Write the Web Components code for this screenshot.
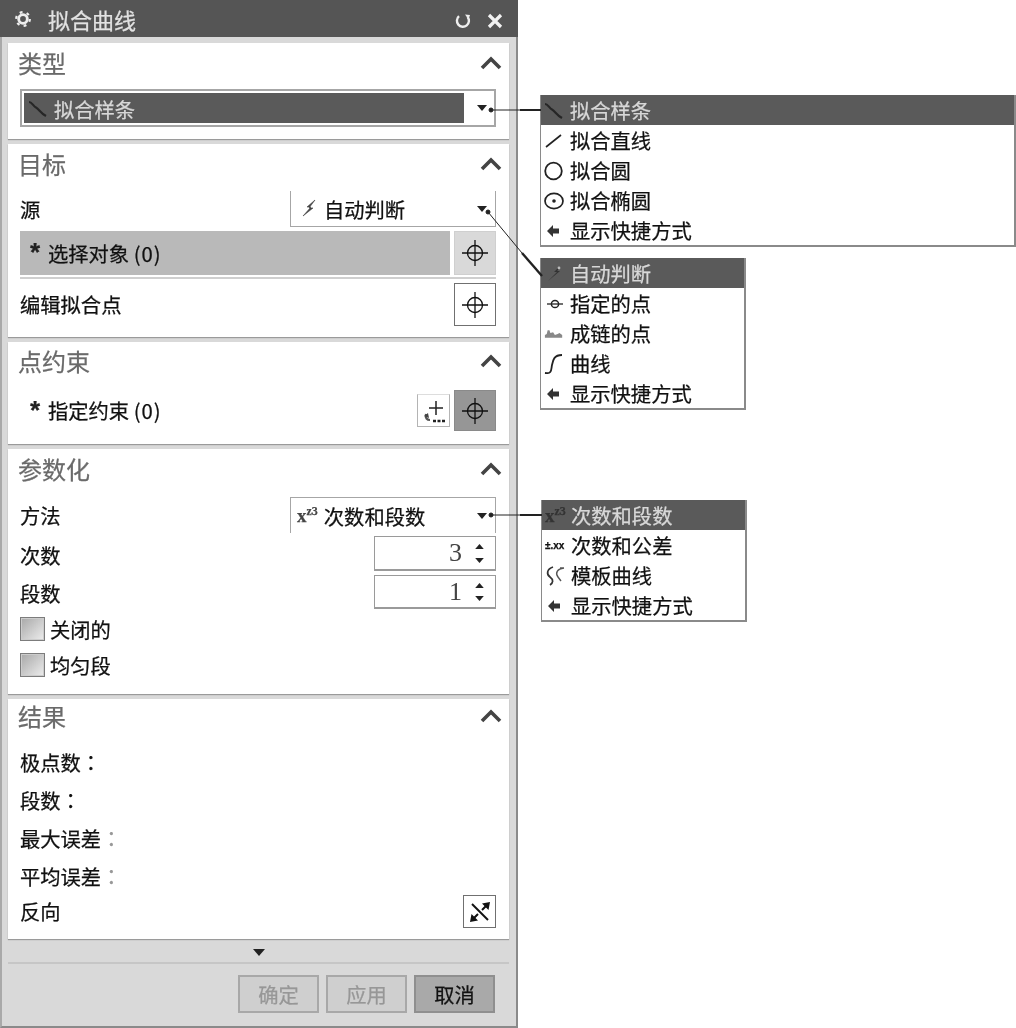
<!DOCTYPE html>
<html lang="zh">
<head>
<meta charset="utf-8">
<title>拟合曲线</title>
<style>
  html, body { margin: 0; background: #fff; }
  body {
    position: relative;
    width: 1016px;
    height: 1028px;
    overflow: hidden;
    font-family: "Noto Sans CJK SC", "Liberation Sans", sans-serif;
    font-size: 20.3px;
    color: #111;
    -webkit-text-stroke: 0.25px;
    filter: blur(0.6px); /* the reference is a soft scan */
  }
  .colon { font-family: "Noto Sans CJK TC", sans-serif; }
  .colon.dim { color: #999; }
  .zero { letter-spacing: 1px; }
  .exp { font: bold 19px "Liberation Serif", serif; color: #444; white-space: nowrap; position: relative; }
  .exp sup { font-size: 12px; line-height: 0; }
</style>
<script>
// Icons used by the dialog and the callout menus
const ICONS = {
  gear: `<svg width="18" height="18" viewBox="0 0 20 20"><circle cx="10" cy="10" r="4.8" fill="none" stroke="#eee" stroke-width="3.2"/><circle cx="10" cy="10" r="7.6" fill="none" stroke="#eee" stroke-width="2.4" stroke-dasharray="3.2 4.76"/></svg>`,
  refresh: `<svg width="20" height="20" viewBox="0 0 20 20"><path d="M6 5.2A6 6 0 1 0 14.6 6" fill="none" stroke="#eee" stroke-width="2.4"/><path d="M12 3.5l5 .4-1.500 4.600z" fill="#eee"/></svg>`,
  close: `<svg width="20" height="20" viewBox="0 0 20 20"><path d="M4 4l12 12M16 4L4 16" stroke="#f2f2f2" stroke-width="3.2"/></svg>`,
  chevron: `<svg width="22" height="14" viewBox="0 0 22 14"><path d="M2 12l9-9 9 9" fill="none" stroke="#444" stroke-width="3.6"/></svg>`,
  down: `<svg width="12" height="7" viewBox="0 0 12 7"><path d="M0 0h12L6 7z" fill="#222"/></svg>`,
  caret: `<svg width="10" height="6" viewBox="0 0 10 6"><path d="M0 0h10L5 6z" fill="#222"/></svg>`,
  cross: `<svg width="28" height="28" viewBox="0 0 28 28"><circle cx="14" cy="14" r="7.5" fill="none" stroke="#111" stroke-width="1.3"/><path d="M1 14h26M14 1v26" stroke="#111" stroke-width="1.3"/></svg>`,
  addpoint: `<svg width="30" height="30" viewBox="0 0 30 30"><path d="M17 5v14M10 12h14" stroke="#222" stroke-width="1.500"/><path d="M7 18c-1 4 1 6 4 6" fill="none" stroke="#555" stroke-width="2.200"/><path d="M5 20l4-3 1 5z" fill="#444"/><path d="M14 25h3M18.500 25h3M23 25h3" stroke="#222" stroke-width="2.400"/></svg>`,
  reverse: `<svg width="26" height="26" viewBox="0 0 26 26"><path d="M5 5l16 16" stroke="#111" stroke-width="2"/><path d="M5 21l6-6M15 11l6-6" stroke="#111" stroke-width="2"/><path d="M23 3l-1.500 8-6.500-6.500zM3 23l1.500-8 6.500 6.500z" fill="#111"/></svg>`,
  spline: `<svg width="20" height="20" viewBox="0 0 20 20"><path d="M1 3c3 0 4 4 7 5.500s4 5 10 8.500" fill="none" stroke="#262626" stroke-width="2.200"/></svg>`,
  line: `<svg width="20" height="20" viewBox="0 0 20 20"><path d="M2 16L17 4" stroke="#222" stroke-width="1.700"/></svg>`,
  circle: `<svg width="20" height="20" viewBox="0 0 20 20"><circle cx="9.500" cy="10" r="8.300" fill="none" stroke="#222" stroke-width="1.800"/></svg>`,
  ellipse: `<svg width="20" height="20" viewBox="0 0 20 20"><ellipse cx="10" cy="10" rx="9" ry="7.600" fill="none" stroke="#222" stroke-width="1.700"/><circle cx="10" cy="10" r="1.800" fill="#222"/></svg>`,
  shortcut: `<svg width="20" height="20" viewBox="0 0 20 20"><path d="M3 10l6-6v3.500h6v5H9V16z" fill="#333"/></svg>`,
  auto: `<svg width="20" height="20" viewBox="0 0 20 20"><path d="M15 1L7 8h4L3 17l10-8H9l6-8z" fill="#444" stroke="#444" stroke-width=".6"/></svg>`,
  autodark: `<svg width="20" height="20" viewBox="0 0 20 20"><path d="M15 3l-5 5h3l-9 9 12-10h-3l3-3z" fill="#333"/><circle cx="15" cy="4" r="1.400" fill="#bbb"/></svg>`,
  point: `<svg width="20" height="20" viewBox="0 0 20 20"><circle cx="11" cy="10" r="3.600" fill="none" stroke="#222" stroke-width="1.500"/><path d="M3 10h16" stroke="#222" stroke-width="1.300"/></svg>`,
  chain: `<svg width="22" height="20" viewBox="0 0 22 20"><path d="M1 11l2-1 1-4 2 0 1 3 3-1 2 3 3-1 2-1 3 2v3H1z" fill="#888"/></svg>`,
  curve: `<svg width="20" height="20" viewBox="0 0 20 20"><path d="M1 19c7 1 6-3 7-8s2-10 10-10" fill="none" stroke="#222" stroke-width="1.800"/></svg>`,
  template: `<svg width="20" height="20" viewBox="0 0 20 20"><path d="M8 1C2 3 1 8 5 11s3 6 0 8" fill="none" stroke="#333" stroke-width="1.700"/><path d="M19 2c-7 1-9 5-6 9l3 4M15 2h4" fill="none" stroke="#555" stroke-width="1.400"/></svg>`
};

class NxDialog extends HTMLElement {
  constructor() {
    super();
    this.attachShadow({ mode: "open" });
  }

  connectedCallback() {
    const title = this.getAttribute("title") || "";
    this.shadowRoot.innerHTML = `
      <style>
        :host { display: flex; flex-direction: column; width: 518px; height: 1028px; box-sizing: border-box; }
        .bar { flex: none; height: 37px; background: #555; color: #e2e2e2; display: flex; align-items: center; font-size: 22px; padding-left: 14px; }
        .bar .name { margin-left: 16px; flex: 1; line-height: 37px; position: relative; top: 1px; }
        .bar .btn { display: flex; margin-right: 12px; position: relative; top: 2px; }
        .bar .btn + .btn { margin-right: 13px; }
        .body { flex: 1; display: flex; flex-direction: column; gap: 5px; background: #d9d9d9; padding: 6px 7px 0 6px; border-left: 2px solid #a9a9a9; border-right: 2px solid #8a8a8a; border-bottom: 2px solid #8a8a8a; }
        .more { height: 22px; display: flex; justify-content: center; align-items: center; margin: -3px 0 -6px; }
        .foot { border-top: 2px solid #c6c6c6; display: flex; justify-content: flex-end; gap: 7px; padding: 11px 14px 0 0; }
      </style>
      <div class="bar">
        <span class="btn" style="top:0;margin:0">${ICONS.gear}</span>
        <span class="name">${title}</span>
        <span class="btn">${ICONS.refresh}</span>
        <span class="btn">${ICONS.close}</span>
      </div>
      <div class="body">
        <slot></slot>
        <div class="more">${ICONS.down}</div>
        <div class="foot"><slot name="foot"></slot></div>
      </div>`;
  }
}

class NxSection extends HTMLElement {
  constructor() {
    super();
    this.attachShadow({ mode: "open" });
  }

  connectedCallback() {
    const title = this.getAttribute("title") || "";
    const head = this.getAttribute("head") || "46";
    const pad = this.getAttribute("pad") || "12";
    const lift = Number(this.getAttribute("lift") || 0);
    this.shadowRoot.innerHTML = `
      <style>
        :host { display: block; background: #fff; box-shadow: 0 1px 1px #9a9a9a; }
        .head { height: ${head}px; display: flex; justify-content: space-between; padding: 0 7px 0 10px; box-sizing: border-box; }
        .title { font-size: 24px; line-height: ${40 - 2 * lift}px; color: #6a6a6a; }
        .chev { display: flex; margin-top: ${13 - lift}px; }
        .content { padding: 0 13px ${pad}px 12px; display: flex; flex-direction: column; }
      </style>
      <div class="head"><span class="title">${title}</span><span class="chev">${ICONS.chevron}</span></div>
      <div class="content"><slot></slot></div>`;
  }
}

class NxRow extends HTMLElement {
  constructor() {
    super();
    this.attachShadow({ mode: "open" });
  }

  connectedCallback() {
    const h = this.getAttribute("h") || "38";
    const mt = this.getAttribute("mt") || "0";
    this.shadowRoot.innerHTML = `
      <style>
        :host { display: flex; align-items: center; justify-content: space-between; height: ${h}px; margin-top: ${mt}px; gap: 4px; line-height: 1; }
      </style>
      <slot></slot>`;
  }
}

class NxDropdown extends HTMLElement {
  constructor() {
    super();
    this.attachShadow({ mode: "open" });
  }

  connectedCallback() {
    const icon = this.getAttribute("icon");
    const open = this.getAttribute("open") || "none";
    const full = this.hasAttribute("full");
    const inset = this.getAttribute("inset") || "9";
    const gap = this.getAttribute("gap") || "5";
    this.shadowRoot.innerHTML = `
      <style>
        :host { display: block; box-sizing: border-box; height: 100%; width: ${full ? "100%" : "206px"}; border: ${full ? 2 : 1}px solid #a6a6a6; border-${open}: 0; background: #fff; }
        .inner { height: 100%; display: flex; align-items: center; padding-left: ${inset}px; box-sizing: border-box; }
        .value { display: flex; align-items: center; gap: ${gap}px; flex: 1; padding-top: 1px; }
        .bar { background: #5a5a5a; color: #d8d8d8; height: 30px; margin: 2px 0 2px 2px; padding: 2px 0 0 4px; box-sizing: border-box; }
        .arrow { display: flex; margin-right: 4px; margin-left: auto; width: 14px; }
        .mark { display: flex; }
      </style>
      <div class="inner" style="${full ? "padding-left:0" : ""}">
        <div class="value ${full ? "bar" : ""}">
          <span class="mark">${icon ? ICONS[icon] : ""}</span><slot name="mark"></slot><slot></slot>
        </div>
        <span class="arrow" style="${full ? "margin-left:13px;margin-right:3px" : ""}">${ICONS.caret}</span>
      </div>`;
  }
}

class NxTool extends HTMLElement {
  constructor() {
    super();
    this.attachShadow({ mode: "open" });
  }

  connectedCallback() {
    const icon = this.getAttribute("icon") || "cross";
    const size = this.getAttribute("size") || "42";
    const tall = this.getAttribute("tall") || size;
    const tone = this.getAttribute("tone") || "plain";
    const look = {
      plain: "background:#fff;border:1px solid #707070;",
      soft: "background:#d9d9d9;border:1px solid #cfcfcf;",
      active: "background:#969696;border:1px solid #8a8a8a;",
      flat: "background:#fff;border:1px solid #b4b4b4;border-top-color:#ddd;"
    }[tone];
    this.shadowRoot.innerHTML = `
      <style>
        :host { display: flex; flex: none; align-items: center; justify-content: center; box-sizing: border-box; width: ${size}px; height: ${tall}px; ${look} }
      </style>
      ${ICONS[icon]}`;
  }
}

class NxSelection extends HTMLElement {
  constructor() {
    super();
    this.attachShadow({ mode: "open" });
  }

  connectedCallback() {
    const active = this.hasAttribute("active");
    this.shadowRoot.innerHTML = `
      <style>
        :host { display: flex; flex: 1; align-items: center; height: 100%; padding-left: 10px; background: ${active ? "#b9b9b9" : "transparent"}; }
        .star { font-family: "Liberation Sans", sans-serif; font-weight: bold; font-size: 26px; width: 18px; height: 18px; line-height: 22px; color: #222; position: relative; top: -3px; }
      </style>
      <span class="star">*</span><slot></slot>`;
  }
}

class NxSpinner extends HTMLElement {
  constructor() {
    super();
    this.attachShadow({ mode: "open" });
  }

  connectedCallback() {
    this.shadowRoot.innerHTML = `
      <style>
        :host { display: flex; align-items: center; box-sizing: border-box; width: 122px; height: 100%; border: 1px solid #9a9a9a; border-bottom-width: 2px; background: #fff; }
        .val { flex: 1; text-align: right; font-family: "Liberation Serif", serif; font-size: 26px; color: #444; padding-right: 11px; -webkit-text-stroke: 0; }
        .steps { width: 13px; margin-right: 9px; height: 100%; display: flex; flex-direction: column; justify-content: space-between; align-items: center; padding: 7px 0 6px; box-sizing: border-box; }
        .up { transform: rotate(180deg); }
        .steps svg { display: block; width: 9px; height: 5px; }
      </style>
      <span class="val"><slot></slot></span>
      <span class="steps"><span class="up">${ICONS.down}</span><span>${ICONS.down}</span></span>`;
  }
}

class NxCheck extends HTMLElement {
  constructor() {
    super();
    this.attachShadow({ mode: "open" });
  }

  connectedCallback() {
    this.shadowRoot.innerHTML = `
      <style>
        :host { display: flex; align-items: center; gap: 5px; height: 100%; line-height: 1; }
        .box { width: 25px; height: 24px; box-sizing: border-box; border: 1px solid #7c7c7c; outline: 1px solid #ccc; outline-offset: -2px; background: linear-gradient(135deg, #a8a8a8, #ededed); }
      </style>
      <span class="box"></span><span><slot></slot></span>`;
  }
}

class NxButton extends HTMLElement {
  constructor() {
    super();
    this.attachShadow({ mode: "open" });
  }

  connectedCallback() {
    const primary = this.hasAttribute("primary");
    this.shadowRoot.innerHTML = `
      <style>
        :host { display: flex; align-items: center; justify-content: center; box-sizing: border-box; width: 81px; height: 38px; line-height: 1; border: 2px solid ${primary ? "#8f8f8f" : "#a8a8a8"}; background: ${primary ? "#a9a9a9" : "#cfcfcf"}; color: ${primary ? "#111" : "#979797"}; }
      </style>
      <slot></slot>`;
  }
}

class NxMenu extends HTMLElement {
  constructor() {
    super();
    this.attachShadow({ mode: "open" });
  }

  connectedCallback() {
    this.shadowRoot.innerHTML = `
      <style>
        :host { position: absolute; display: block; box-sizing: border-box; background: #fff; border-left: 1px solid #8a8a8a; border-right: 2px solid #8a8a8a; border-bottom: 2px solid #8a8a8a; }
      </style>
      <slot></slot>`;
  }
}

class NxMenuItem extends HTMLElement {
  constructor() {
    super();
    this.attachShadow({ mode: "open" });
  }

  connectedCallback() {
    const icon = this.getAttribute("icon");
    const sel = this.hasAttribute("selected");
    this.shadowRoot.innerHTML = `
      <style>
        :host { display: flex; align-items: center; box-sizing: border-box; height: 30px; line-height: 1; padding: 1px 0 0 3px; background: ${sel ? "#5a5a5a" : "transparent"}; color: ${sel ? "#d8d8d8" : "#111"}; }
        .icon { width: 20px; height: 20px; display: flex; align-items: center; margin-right: 6px; }
      </style>
      <span class="icon">${icon ? ICONS[icon] : ""}<slot name="icon"></slot></span><slot></slot>`;
  }
}

customElements.define("nx-dialog", NxDialog);
customElements.define("nx-section", NxSection);
customElements.define("nx-row", NxRow);
customElements.define("nx-dropdown", NxDropdown);
customElements.define("nx-tool", NxTool);
customElements.define("nx-selection", NxSelection);
customElements.define("nx-spinner", NxSpinner);
customElements.define("nx-check", NxCheck);
customElements.define("nx-button", NxButton);
customElements.define("nx-menu", NxMenu);
customElements.define("nx-menu-item", NxMenuItem);
</script>
</head>
<body>
  <nx-dialog title="拟合曲线">
    <nx-section title="类型" head="46" pad="12">
      <nx-row h="38"><nx-dropdown full icon="spline" gap="6">拟合样条</nx-dropdown></nx-row>
    </nx-section>

    <nx-section title="目标" head="47" pad="11">
      <nx-row h="36"><span>源</span><nx-dropdown icon="auto" open="top" gap="4">自动判断</nx-dropdown></nx-row>
      <nx-row h="44" mt="4"><nx-selection active><span>选择对象 <span class="zero">(0)</span></span></nx-selection><nx-tool icon="cross" tone="soft" tall="44"></nx-tool></nx-row>
      <div style="height:2px;background:#cfcfcf;margin-top:2px"></div>
      <nx-row h="43" mt="4"><span>编辑拟合点</span><nx-tool icon="cross" tall="43"></nx-tool></nx-row>
    </nx-section>

    <nx-section title="点约束" head="48" pad="13" lift="1">
      <nx-row h="41"><nx-selection><span>指定约束 <span class="zero">(0)</span></span></nx-selection><nx-tool icon="addpoint" tone="flat" size="33" tall="33"></nx-tool><nx-tool icon="cross" tone="active" tall="41"></nx-tool></nx-row>
    </nx-section>

    <nx-section title="参数化" head="48" pad="17">
      <nx-row h="36"><span>方法</span><nx-dropdown open="bottom" inset="0" gap="6"><span slot="mark" class="exp">x<sup>z</sup><sup>3</sup></span>次数和段数</nx-dropdown></nx-row>
      <nx-row h="35" mt="3"><span style="padding-top:4px">次数</span><nx-spinner>3</nx-spinner></nx-row>
      <nx-row h="34" mt="4"><span style="padding-top:2px">段数</span><nx-spinner>1</nx-spinner></nx-row>
      <nx-row h="24" mt="8"><nx-check>关闭的</nx-check></nx-row>
      <nx-row h="24" mt="12"><nx-check>均匀段</nx-check></nx-row>
    </nx-section>

    <nx-section title="结果" head="44" pad="11" lift="3">
      <nx-row h="38"><span>极点数<span class="colon" lang="zh-TW">：</span></span></nx-row>
      <nx-row h="38"><span>段数<span class="colon" lang="zh-TW">：</span></span></nx-row>
      <nx-row h="38"><span>最大误差<span class="colon dim" lang="zh-TW">：</span></span></nx-row>
      <nx-row h="38"><span>平均误差<span class="colon dim" lang="zh-TW">：</span></span></nx-row>
      <nx-row h="33"><span>反向</span><nx-tool icon="reverse" size="33" tall="33"></nx-tool></nx-row>
    </nx-section>

    <nx-button slot="foot">确定</nx-button>
    <nx-button slot="foot">应用</nx-button>
    <nx-button slot="foot" primary>取消</nx-button>
  </nx-dialog>

  <nx-menu style="left:540px;top:95px;width:476px">
    <nx-menu-item icon="spline" selected>拟合样条</nx-menu-item>
    <nx-menu-item icon="line">拟合直线</nx-menu-item>
    <nx-menu-item icon="circle">拟合圆</nx-menu-item>
    <nx-menu-item icon="ellipse">拟合椭圆</nx-menu-item>
    <nx-menu-item icon="shortcut">显示快捷方式</nx-menu-item>
  </nx-menu>

  <nx-menu style="left:540px;top:258px;width:206px">
    <nx-menu-item icon="autodark" selected>自动判断</nx-menu-item>
    <nx-menu-item icon="point">指定的点</nx-menu-item>
    <nx-menu-item icon="chain">成链的点</nx-menu-item>
    <nx-menu-item icon="curve">曲线</nx-menu-item>
    <nx-menu-item icon="shortcut">显示快捷方式</nx-menu-item>
  </nx-menu>

  <nx-menu style="left:541px;top:500px;width:206px">
    <nx-menu-item selected><span slot="icon" class="exp" style="color:#333">x<sup>z</sup><sup>3</sup></span>次数和段数</nx-menu-item>
    <nx-menu-item><span slot="icon" style="font:bold 10px 'Liberation Sans',sans-serif;white-space:nowrap">±.xx</span>次数和公差</nx-menu-item>
    <nx-menu-item icon="template">模板曲线</nx-menu-item>
    <nx-menu-item icon="shortcut">显示快捷方式</nx-menu-item>
  </nx-menu>

  <!-- leader lines from the dropdown arrows to their callout menus -->
  <svg style="position:absolute;left:0;top:0;pointer-events:none" width="1016" height="1028">
    <g stroke="#222" fill="#222">
      <path d="M491 110H520" stroke-width="1"/><path d="M520 110H541" stroke-width="2"/>
      <circle cx="491" cy="110" r="2"/>
      <path d="M488 212L522 253" stroke-width="1"/><path d="M522 253L542 276" stroke-width="2.400"/>
      <circle cx="488" cy="212" r="2"/>
      <path d="M491 515H520" stroke-width="1"/><path d="M520 515H542" stroke-width="2"/>
      <circle cx="491" cy="515" r="2"/>
    </g>
  </svg>
</body>
</html>
